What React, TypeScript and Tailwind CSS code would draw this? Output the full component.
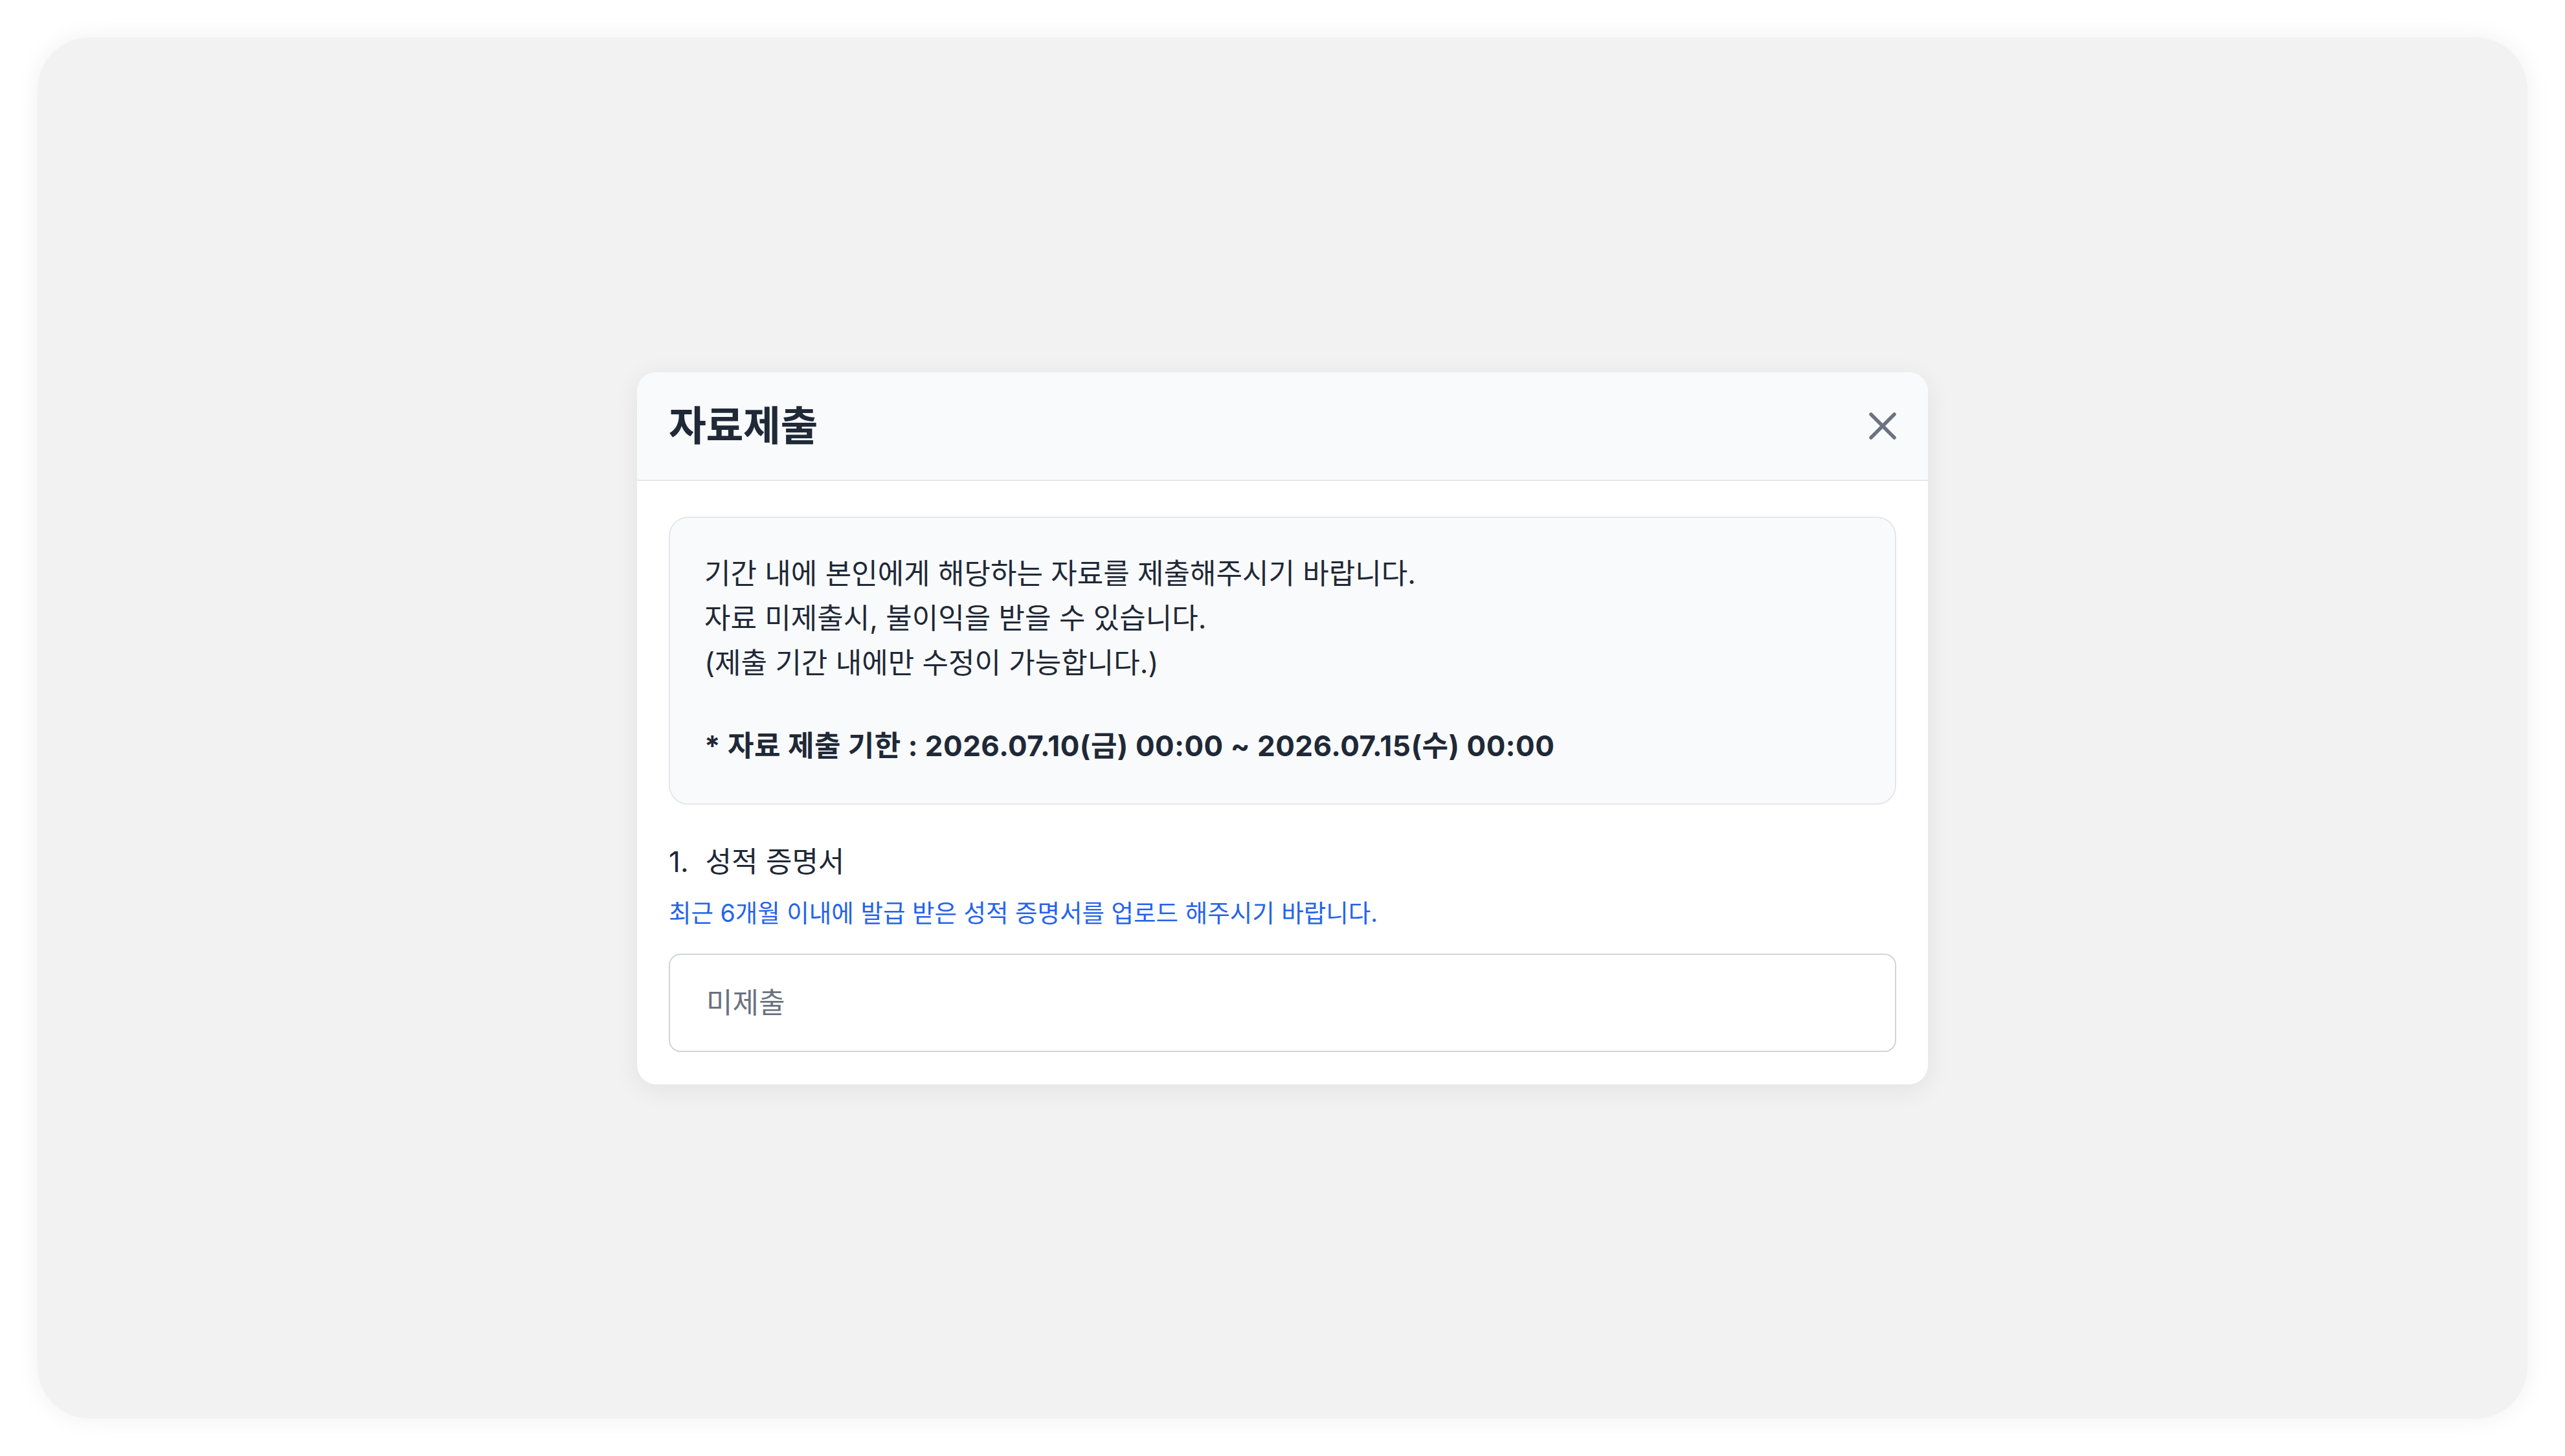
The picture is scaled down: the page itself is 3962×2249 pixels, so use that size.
import type { ReactNode } from "react";

function CloseIcon() {
  return (
    <svg width="42" height="42" viewBox="0 0 42 42" fill="none" aria-hidden="true">
      <path d="M3 3L39 39M39 3L3 39" stroke="#6b7280" strokeWidth="5.5" strokeLinecap="round" />
    </svg>
  );
}

function InfoLine({ children }: { children: ReactNode }) {
  return <p className="leading-[69px]">{children}</p>;
}

export default function App() {
  return (
    <div className="h-screen w-screen bg-white p-[58px] font-['Inter','Noto_Sans_CJK_KR',sans-serif]">
      <div className="flex h-full w-full items-center justify-center rounded-[80px] bg-[#f2f2f2] shadow-[0_0_40px_rgba(0,0,0,0.06)]">
        {/* Modal */}
        <div className="w-[1994px] overflow-hidden rounded-[30px] bg-white shadow-[0_8px_40px_rgba(0,0,0,0.07)]">
          {/* Header */}
          <div className="flex h-[168px] items-center justify-between border-b-2 border-[#e5e7eb] bg-[#f9fafb] px-[49px]">
            <h2 className="text-[63px] font-semibold tracking-[-0.5px] text-[#1f2937]">자료제출</h2>
            <button aria-label="닫기" className="flex items-center justify-center">
              <CloseIcon />
            </button>
          </div>

          {/* Body */}
          <div className="px-[49px] pt-[55px] pb-[50px]">
            <div className="rounded-[30px] border-2 border-[#e5e7eb] bg-[#f9fafb] px-[53px] pt-[52px] pb-[54px] text-[44px] text-[#1f2937]">
              <InfoLine>기간 내에 본인에게 해당하는 자료를 제출해주시기 바랍니다.</InfoLine>
              <InfoLine>자료 미제출시, 불이익을 받을 수 있습니다.</InfoLine>
              <InfoLine>(제출 기간 내에만 수정이 가능합니다.)</InfoLine>
              <p className="mt-[58px] font-bold leading-[70px] tracking-[0.5px]">
                * 자료 제출 기한 : 2026.07.10(금) 00:00 ~ 2026.07.15(수) 00:00
              </p>
            </div>

            <div className="mt-[58px] flex gap-[26px] text-[44px] leading-[60px] text-[#1f2937]">
              <span>1.</span>
              <span>성적 증명서</span>
            </div>
            <p className="mt-[25px] text-[37.5px] leading-[50px] text-[#2563eb]">
              최근 6개월 이내에 발급 받은 성적 증명서를 업로드 해주시기 바랍니다.
            </p>

            <div className="mt-[37px] flex h-[152px] items-center rounded-[18px] border-2 border-[#d1d5db] px-[56px] text-[44px] text-[#6b7280]">
              미제출
            </div>
          </div>
        </div>
      </div>
    </div>
  );
}
